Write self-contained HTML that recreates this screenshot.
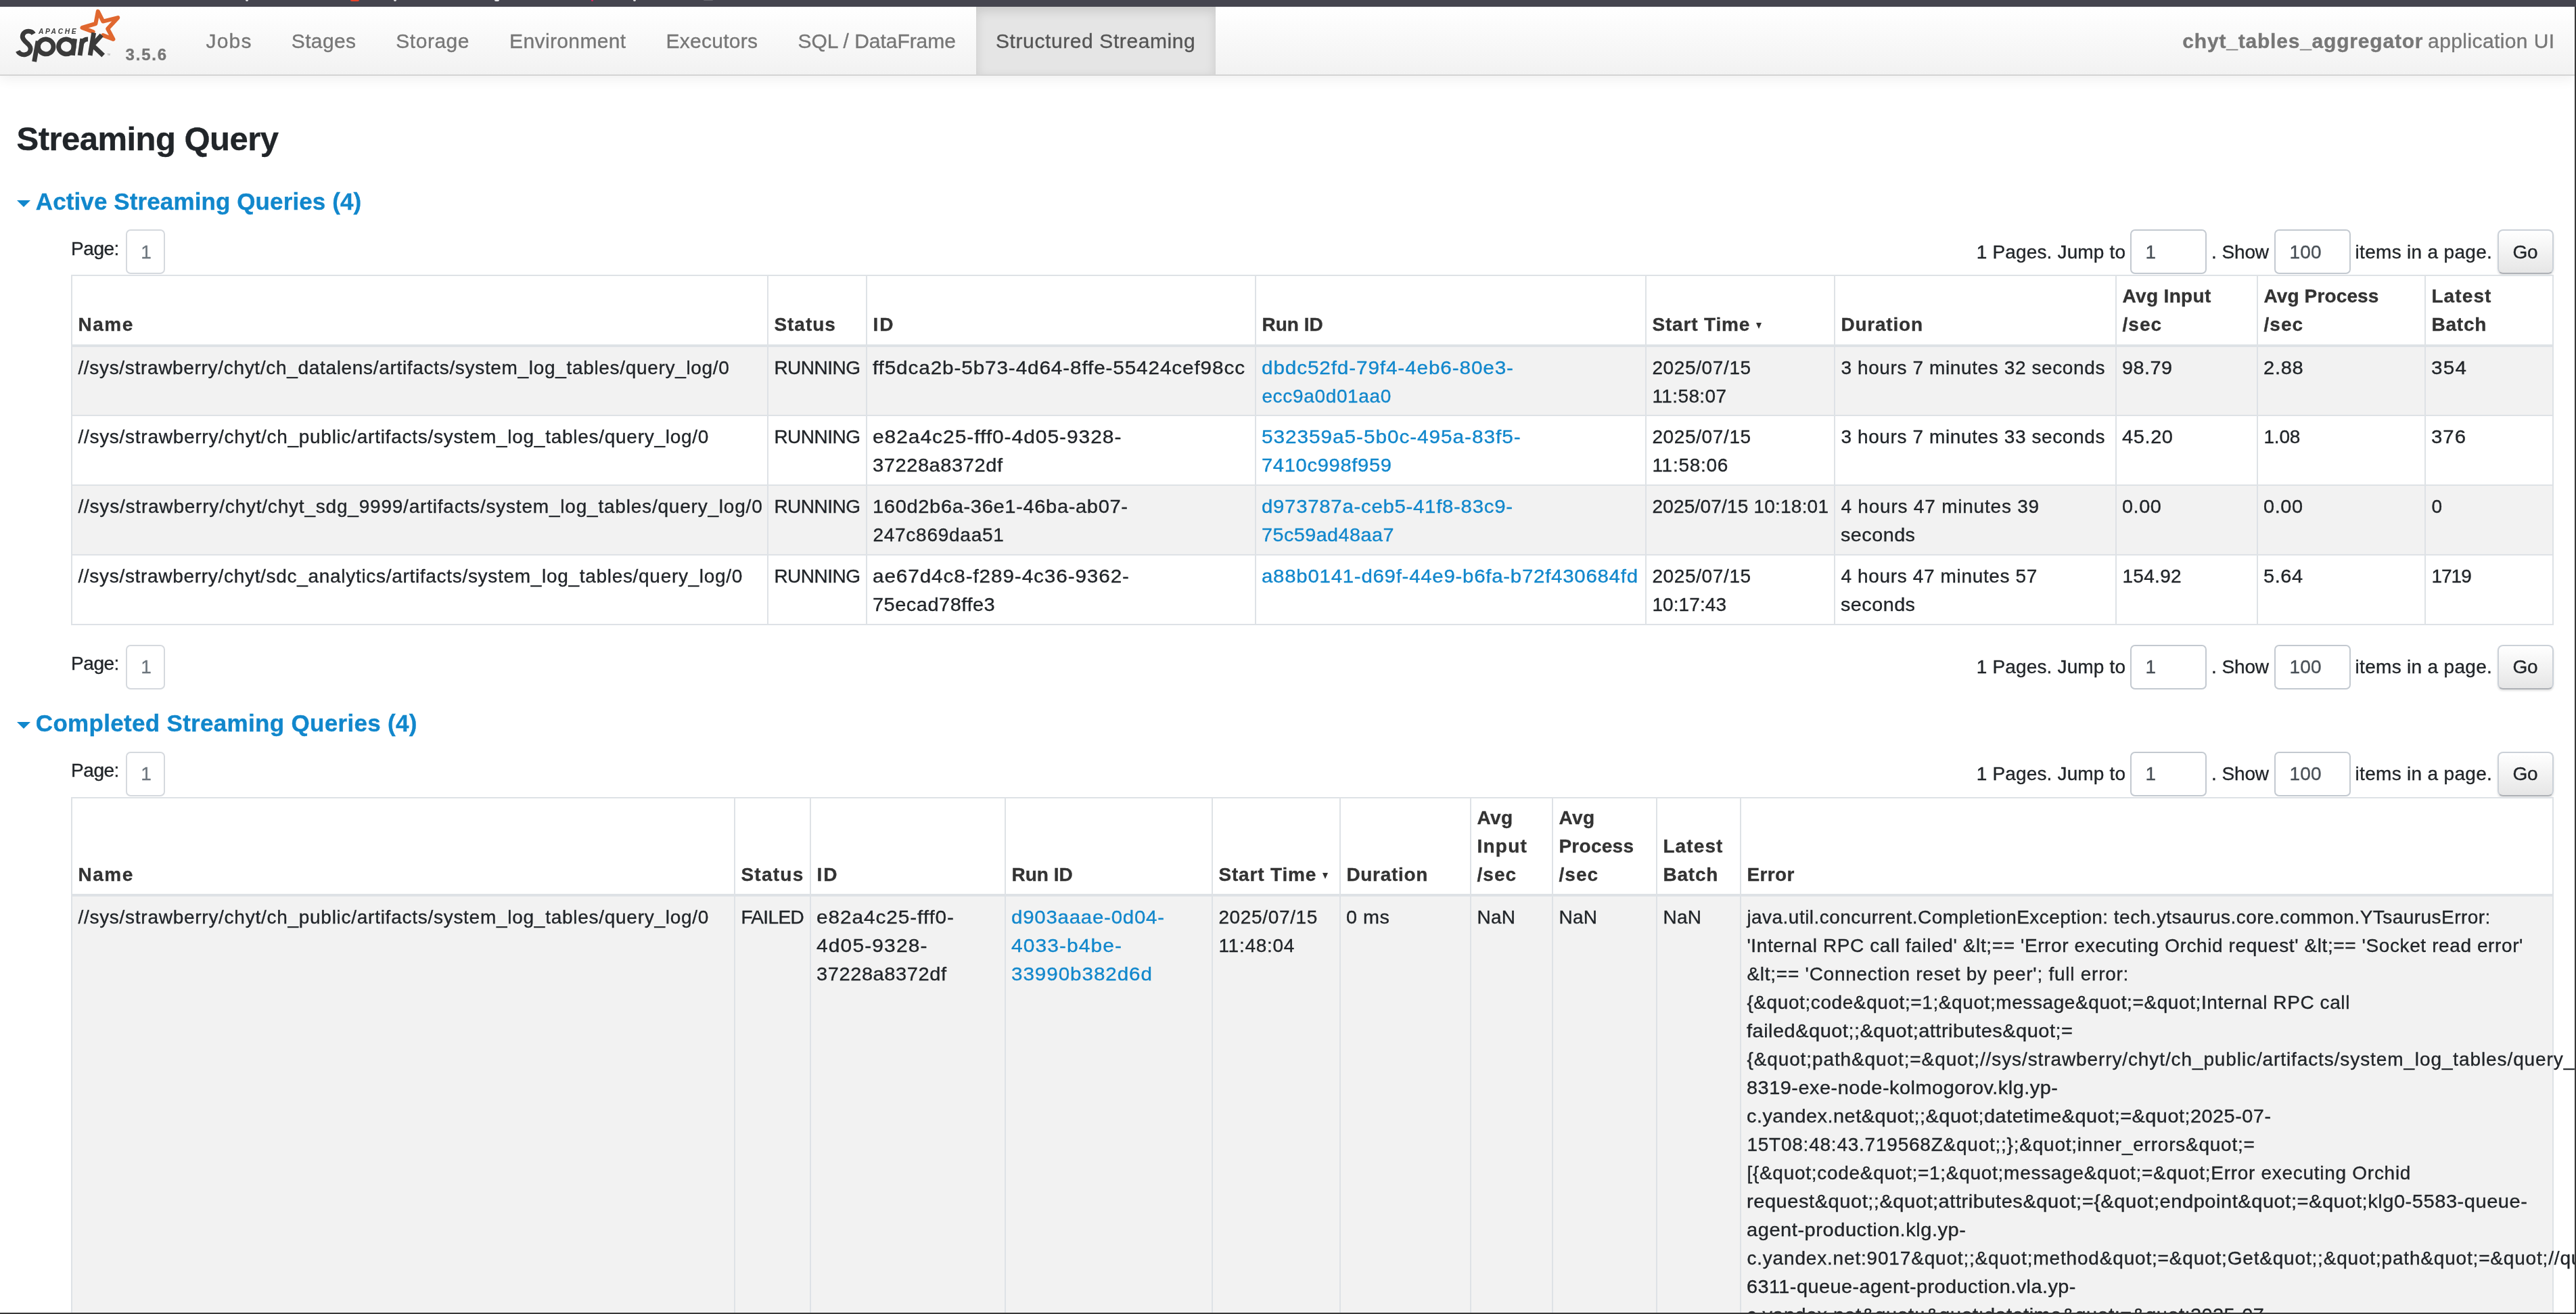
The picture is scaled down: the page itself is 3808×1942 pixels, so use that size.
<!DOCTYPE html><html><head><meta charset="utf-8"><title>Streaming Query</title><style>
html,body{margin:0;padding:0;}
body{width:3808px;height:1942px;overflow:hidden;position:relative;will-change:transform;background:#fff;font-family:"Liberation Sans", sans-serif;color:#212529;-webkit-text-stroke:0.35px currentColor;}
.t{position:absolute;white-space:pre;}
.a{position:absolute;}
#topbar{left:0;top:0;width:3808px;height:10px;background:#45454f;z-index:5}
#rframe{left:3806px;top:10px;width:2px;height:1932px;background:#383838;z-index:5}
#bframe{left:0;top:1940px;width:3808px;height:2px;background:#383838;z-index:5}
#nav{left:0;top:10px;width:3806px;height:100px;background:linear-gradient(#ffffff,#f2f2f2);border-bottom:2px solid #d4d4d4;box-shadow:0 4px 18px rgba(0,0,0,.07);}
#navact{left:1443px;top:10px;width:354px;height:100px;background:#e5e5e5;box-shadow:inset 0 6px 16px rgba(0,0,0,.125);}
.box{position:absolute;box-sizing:border-box;border:2px solid #ced4da;border-radius:7px;background:#fff;}
.go{position:absolute;box-sizing:border-box;border:2px solid #cbd1d8;border-bottom-color:#aeb1b6;border-radius:8px;background:linear-gradient(#ffffff,#e6e6e6);box-shadow:0 2px 3px rgba(0,0,0,.12);}
.arrow{position:absolute;width:0;height:0;border-left:10px solid transparent;border-right:10px solid transparent;border-top:10px solid #1187cc;}
table.tb{position:absolute;border-collapse:separate;border-spacing:0;table-layout:fixed;border-top:2px solid #dee2e6;border-left:2px solid #dee2e6;font-size:28px;line-height:42px;}
table.tb th, table.tb td{box-sizing:border-box;border-right:2px solid #dee2e6;border-bottom:2px solid #dee2e6;padding:8.5px 8.4px;white-space:nowrap;overflow:visible;text-align:left;}
table.tb th{vertical-align:bottom;font-weight:700;color:#333;border-bottom-width:4px;}
table.tb td{vertical-align:top;}
table.tb tr.odd td{background:#f2f2f2;}
table.tb td{padding:9.5px 8.4px 7.5px 8.4px;}
table.tb tbody tr:first-child td{padding-bottom:6.5px;}
table.tb.c3 th{padding-top:8px;padding-bottom:7px}
a{color:#1187cc;text-decoration:none;}
</style></head><body><div id="topbar" class="a"></div><div id="rframe" class="a"></div><div id="bframe" class="a"></div><div class="a" style="left:363px;top:0;width:4px;height:2px;background:#e8e8ea;z-index:6;border-radius:0 0 2px 2px"></div><div class="a" style="left:518px;top:0;width:13px;height:2px;background:#e8432a;z-index:6;border-radius:0 0 2px 2px"></div><div class="a" style="left:582px;top:0;width:4px;height:2px;background:#e8e8ea;z-index:6;border-radius:0 0 2px 2px"></div><div class="a" style="left:731px;top:0;width:7px;height:2px;background:#e8e8ea;z-index:6;border-radius:0 0 2px 2px"></div><div class="a" style="left:874px;top:0;width:3px;height:2px;background:#e0245e;z-index:6;border-radius:0 0 2px 2px"></div><div class="a" style="left:936px;top:0;width:4px;height:2px;background:#e8e8ea;z-index:6;border-radius:0 0 2px 2px"></div><div class="a" style="left:1040px;top:0;width:14px;height:1px;background:#6a6a72;z-index:6;border-radius:0 0 2px 2px"></div><div id="nav" class="a"></div><div id="navact" class="a"></div><svg class="a" style="left:15px;top:10px" width="170" height="90" viewBox="0 0 2482 1314">
<g fill="none" stroke-linecap="round" stroke-linejoin="round">
<polyline points="1790,540 1555,450 1845,365 1895,100 2005,315 2325,235 2105,475 2225,700 2005,615" stroke="#e0672f" stroke-width="88"/>
<g stroke="#3a3a3a" stroke-width="100">
<path d="M505,585 C470,520 330,490 275,600 C230,700 360,770 400,820 C460,880 460,1000 330,1030 C240,1050 180,990 165,955" stroke-linecap="butt"/>
<ellipse cx="770" cy="860" rx="165" ry="160" transform="rotate(8 770 860)"/>
<path d="M600,740 L520,1185" stroke-linecap="butt"/>
<ellipse cx="1210" cy="860" rx="165" ry="160" transform="rotate(8 1210 860)"/>
<path d="M1395,690 L1350,1050" stroke-linecap="butt"/>
<path d="M1560,690 L1505,1050" stroke-linecap="butt"/>
<path d="M1540,800 C1570,720 1620,700 1680,700" stroke-linecap="butt"/>
<path d="M1805,560 L1725,1050" stroke-linecap="butt"/>
<path d="M1975,610 L1775,830 L2010,1050" stroke-linecap="butt"/>
</g>
</g>
<text x="612" y="582" font-family="Liberation Sans" font-weight="700" font-style="italic" font-size="150" letter-spacing="38" fill="#3a3a3a">APACHE</text>
<text x="2100" y="1050" font-family="Liberation Sans" font-size="40" fill="#777">TM</text>
</svg>
<div class="t" style="left:185.5px;top:68.9px;font-size:24px;line-height:24px;font-weight:700;color:#777;letter-spacing:1.827px;">3.5.6</div><div class="t" style="left:304.4px;top:45.6px;font-size:30px;line-height:30px;font-weight:400;color:#777;letter-spacing:1.242px;">Jobs</div><div class="t" style="left:430.8px;top:45.6px;font-size:30px;line-height:30px;font-weight:400;color:#777;letter-spacing:0.359px;">Stages</div><div class="t" style="left:585.3px;top:45.6px;font-size:30px;line-height:30px;font-weight:400;color:#777;letter-spacing:0.520px;">Storage</div><div class="t" style="left:753.1px;top:45.6px;font-size:30px;line-height:30px;font-weight:400;color:#777;letter-spacing:0.368px;">Environment</div><div class="t" style="left:984.5px;top:45.6px;font-size:30px;line-height:30px;font-weight:400;color:#777;letter-spacing:0.276px;">Executors</div><div class="t" style="left:1179.5px;top:45.6px;font-size:30px;line-height:30px;font-weight:400;color:#777;letter-spacing:-0.041px;">SQL / DataFrame</div><div class="t" style="left:1472.0px;top:45.6px;font-size:30px;line-height:30px;font-weight:400;color:#555;letter-spacing:0.596px;">Structured Streaming</div><div class="t" style="left:3226.3px;top:45.6px;font-size:30px;line-height:30px;font-weight:700;color:#777;letter-spacing:0.797px;">chyt_tables_aggregator</div><div class="t" style="left:3589.1px;top:45.6px;font-size:30px;line-height:30px;font-weight:400;color:#777;letter-spacing:0.401px;">application UI</div><div class="t" style="left:24.6px;top:180.5px;font-size:49px;line-height:49px;font-weight:700;color:#212529;letter-spacing:-0.533px;">Streaming Query</div><div class="arrow" style="left:25px;top:296px"></div><div class="t" style="left:52.8px;top:280.4px;font-size:35px;line-height:35px;font-weight:700;color:#1187cc;letter-spacing:0.107px;">Active Streaming Queries (4)</div><div class="arrow" style="left:25px;top:1067px"></div><div class="t" style="left:52.8px;top:1050.9px;font-size:35px;line-height:35px;font-weight:700;color:#1187cc;letter-spacing:0.313px;">Completed Streaming Queries (4)</div><div class="t" style="left:105.1px;top:354.3px;font-size:28px;line-height:28px;font-weight:400;color:#212529;letter-spacing:-0.468px;">Page:</div><div class="box" style="left:186px;top:339px;width:58px;height:66px;border-color:#d5d9de"></div><div class="t" style="left:208.3px;top:359.3px;font-size:28px;line-height:28px;font-weight:400;color:#6c757d;letter-spacing:0.000px;">1</div><div class="t" style="left:2921.8px;top:358.8px;font-size:28px;line-height:28px;font-weight:400;color:#212529;letter-spacing:0.153px;">1 Pages. Jump to</div><div class="box" style="left:3149px;top:339px;width:113px;height:66px;border-color:#c3c9d0"></div><div class="t" style="left:3171.5px;top:358.8px;font-size:28px;line-height:28px;font-weight:400;color:#495057;letter-spacing:0.000px;">1</div><div class="t" style="left:3269.1px;top:358.8px;font-size:28px;line-height:28px;font-weight:400;color:#212529;letter-spacing:-0.122px;">. Show</div><div class="box" style="left:3362px;top:339px;width:113px;height:66px;border-color:#c3c9d0"></div><div class="t" style="left:3384.5px;top:358.8px;font-size:28px;line-height:28px;font-weight:400;color:#495057;letter-spacing:0.141px;">100</div><div class="t" style="left:3481.5px;top:358.8px;font-size:28px;line-height:28px;font-weight:400;color:#212529;letter-spacing:0.315px;">items in a page.</div><div class="go" style="left:3692px;top:339px;width:83px;height:66px;"></div><div class="t" style="left:3714.5px;top:358.8px;font-size:28px;line-height:28px;font-weight:400;color:#212529;letter-spacing:-0.359px;">Go</div><div class="t" style="left:105.1px;top:967.3px;font-size:28px;line-height:28px;font-weight:400;color:#212529;letter-spacing:-0.468px;">Page:</div><div class="box" style="left:186px;top:952.5px;width:58px;height:66px;border-color:#d5d9de"></div><div class="t" style="left:208.3px;top:972.3px;font-size:28px;line-height:28px;font-weight:400;color:#6c757d;letter-spacing:0.000px;">1</div><div class="t" style="left:2921.8px;top:971.6px;font-size:28px;line-height:28px;font-weight:400;color:#212529;letter-spacing:0.153px;">1 Pages. Jump to</div><div class="box" style="left:3149px;top:952.5px;width:113px;height:66px;border-color:#c3c9d0"></div><div class="t" style="left:3171.5px;top:971.6px;font-size:28px;line-height:28px;font-weight:400;color:#495057;letter-spacing:0.000px;">1</div><div class="t" style="left:3269.1px;top:971.6px;font-size:28px;line-height:28px;font-weight:400;color:#212529;letter-spacing:-0.122px;">. Show</div><div class="box" style="left:3362px;top:952.5px;width:113px;height:66px;border-color:#c3c9d0"></div><div class="t" style="left:3384.5px;top:971.6px;font-size:28px;line-height:28px;font-weight:400;color:#495057;letter-spacing:0.141px;">100</div><div class="t" style="left:3481.5px;top:971.6px;font-size:28px;line-height:28px;font-weight:400;color:#212529;letter-spacing:0.315px;">items in a page.</div><div class="go" style="left:3692px;top:952.5px;width:83px;height:66px;"></div><div class="t" style="left:3714.5px;top:971.6px;font-size:28px;line-height:28px;font-weight:400;color:#212529;letter-spacing:-0.359px;">Go</div><div class="t" style="left:105.1px;top:1124.9px;font-size:28px;line-height:28px;font-weight:400;color:#212529;letter-spacing:-0.468px;">Page:</div><div class="box" style="left:186px;top:1110.5px;width:58px;height:66px;border-color:#d5d9de"></div><div class="t" style="left:208.3px;top:1129.9px;font-size:28px;line-height:28px;font-weight:400;color:#6c757d;letter-spacing:0.000px;">1</div><div class="t" style="left:2921.8px;top:1129.6px;font-size:28px;line-height:28px;font-weight:400;color:#212529;letter-spacing:0.153px;">1 Pages. Jump to</div><div class="box" style="left:3149px;top:1110.5px;width:113px;height:66px;border-color:#c3c9d0"></div><div class="t" style="left:3171.5px;top:1129.6px;font-size:28px;line-height:28px;font-weight:400;color:#495057;letter-spacing:0.000px;">1</div><div class="t" style="left:3269.1px;top:1129.6px;font-size:28px;line-height:28px;font-weight:400;color:#212529;letter-spacing:-0.122px;">. Show</div><div class="box" style="left:3362px;top:1110.5px;width:113px;height:66px;border-color:#c3c9d0"></div><div class="t" style="left:3384.5px;top:1129.6px;font-size:28px;line-height:28px;font-weight:400;color:#495057;letter-spacing:0.141px;">100</div><div class="t" style="left:3481.5px;top:1129.6px;font-size:28px;line-height:28px;font-weight:400;color:#212529;letter-spacing:0.315px;">items in a page.</div><div class="go" style="left:3692px;top:1110.5px;width:83px;height:66px;"></div><div class="t" style="left:3714.5px;top:1129.6px;font-size:28px;line-height:28px;font-weight:400;color:#212529;letter-spacing:-0.359px;">Go</div><table class="tb " style="left:105px;top:406px;width:3670px;"><colgroup><col style="width:1029px"><col style="width:146px"><col style="width:575px"><col style="width:577px"><col style="width:279px"><col style="width:416px"><col style="width:209px"><col style="width:248px"><col style="width:189px"></colgroup><thead><tr><th style="height:101px"><span style="letter-spacing:1.578px;">Name</span></th><th style="height:101px"><span style="letter-spacing:0.984px;">Status</span></th><th style="height:101px"><span style="letter-spacing:2.000px;">ID</span></th><th style="height:101px"><span style="letter-spacing:0.016px;">Run ID</span></th><th style="height:101px"><span style="letter-spacing:0.842px;">Start Time</span><span style="display:inline-block;width:0;height:0;border-left:4.5px solid transparent;border-right:4.5px solid transparent;border-top:9px solid #333;margin-left:9px;position:relative;top:-3px"></span></th><th style="height:101px"><span style="letter-spacing:0.784px;">Duration</span></th><th style="height:101px"><span style="letter-spacing:0.367px;">Avg Input</span><br><span style="letter-spacing:1.100px;">/sec</span></th><th style="height:101px"><span style="letter-spacing:0.139px;">Avg Process</span><br><span style="letter-spacing:1.100px;">/sec</span></th><th style="height:101px"><span style="letter-spacing:1.106px;">Latest</span><br><span style="letter-spacing:0.801px;">Batch</span></th></tr></thead><tbody><tr class="odd"><td><span style="letter-spacing:0.680px;">//sys/strawberry/chyt/ch_datalens/artifacts/system_log_tables/query_log/0</span></td><td><span style="letter-spacing:-0.495px;">RUNNING</span></td><td><span style="display:inline-block;transform:scaleX(1.0620);transform-origin:0 50%;letter-spacing:0.816px;">ff5dca2b-5b73-4d64-8ffe-55424cef98cc</span></td><td><a><span style="display:inline-block;transform:scaleX(1.0609);transform-origin:0 50%;letter-spacing:0.828px;">dbdc52fd-79f4-4eb6-80e3-</span></a><br><a><span style="letter-spacing:0.661px;">ecc9a0d01aa0</span></a></td><td><span style="letter-spacing:0.629px;">2025/07/15</span><br><span style="letter-spacing:0.397px;">11:58:07</span></td><td><span style="letter-spacing:0.609px;">3 hours 7 minutes 32 seconds</span></td><td><span style="display:inline-block;transform:scaleX(1.0280);transform-origin:0 50%;letter-spacing:0.477px;">98.79</span></td><td><span style="display:inline-block;transform:scaleX(1.0394);transform-origin:0 50%;letter-spacing:0.689px;">2.88</span></td><td><span style="display:inline-block;transform:scaleX(1.0565);transform-origin:0 50%;letter-spacing:1.250px;">354</span></td></tr><tr class="even"><td><span style="letter-spacing:0.731px;">//sys/strawberry/chyt/ch_public/artifacts/system_log_tables/query_log/0</span></td><td><span style="letter-spacing:-0.495px;">RUNNING</span></td><td><span style="display:inline-block;transform:scaleX(1.0691);transform-origin:0 50%;letter-spacing:0.907px;">e82a4c25-fff0-4d05-9328-</span><br><span style="display:inline-block;transform:scaleX(1.0361);transform-origin:0 50%;letter-spacing:0.567px;">37228a8372df</span></td><td><a><span style="display:inline-block;transform:scaleX(1.0637);transform-origin:0 50%;letter-spacing:0.883px;">532359a5-5b0c-495a-83f5-</span></a><br><a><span style="display:inline-block;transform:scaleX(1.0408);transform-origin:0 50%;letter-spacing:0.633px;">7410c998f959</span></a></td><td><span style="letter-spacing:0.629px;">2025/07/15</span><br><span style="letter-spacing:0.725px;">11:58:06</span></td><td><span style="letter-spacing:0.609px;">3 hours 7 minutes 33 seconds</span></td><td><span style="display:inline-block;transform:scaleX(1.0351);transform-origin:0 50%;letter-spacing:0.594px;">45.20</span></td><td><span style="letter-spacing:-0.167px;">1.08</span></td><td><span style="display:inline-block;transform:scaleX(1.0458);transform-origin:0 50%;letter-spacing:1.023px;">376</span></td></tr><tr class="odd"><td><span style="letter-spacing:0.796px;">//sys/strawberry/chyt/chyt_sdg_9999/artifacts/system_log_tables/query_log/0</span></td><td><span style="letter-spacing:-0.495px;">RUNNING</span></td><td><span style="display:inline-block;transform:scaleX(1.0405);transform-origin:0 50%;letter-spacing:0.590px;">160d2b6a-36e1-46ba-ab07-</span><br><span style="letter-spacing:0.746px;">247c869daa51</span></td><td><a><span style="display:inline-block;transform:scaleX(1.0491);transform-origin:0 50%;letter-spacing:0.688px;">d973787a-ceb5-41f8-83c9-</span></a><br><a><span style="display:inline-block;transform:scaleX(1.0273);transform-origin:0 50%;letter-spacing:0.447px;">75c59ad48aa7</span></a></td><td><span style="letter-spacing:0.204px;">2025/07/15 10:18:01</span></td><td><span style="letter-spacing:0.787px;">4 hours 47 minutes 39</span><br><span style="display:inline-block;transform:scaleX(1.0273);transform-origin:0 50%;letter-spacing:0.463px;">seconds</span></td><td><span style="display:inline-block;transform:scaleX(1.0303);transform-origin:0 50%;letter-spacing:0.534px;">0.00</span></td><td><span style="display:inline-block;transform:scaleX(1.0321);transform-origin:0 50%;letter-spacing:0.565px;">0.00</span></td><td>0</td></tr><tr class="even"><td><span style="letter-spacing:0.694px;">//sys/strawberry/chyt/sdc_analytics/artifacts/system_log_tables/query_log/0</span></td><td><span style="letter-spacing:-0.495px;">RUNNING</span></td><td><span style="display:inline-block;transform:scaleX(1.0610);transform-origin:0 50%;letter-spacing:0.844px;">ae67d4c8-f289-4c36-9362-</span><br><span style="display:inline-block;transform:scaleX(1.0340);transform-origin:0 50%;letter-spacing:0.505px;">75ecad78ffe3</span></td><td><a><span style="display:inline-block;transform:scaleX(1.0511);transform-origin:0 50%;letter-spacing:0.701px;">a88b0141-d69f-44e9-b6fa-b72f430684fd</span></a></td><td><span style="letter-spacing:0.629px;">2025/07/15</span><br><span style="letter-spacing:0.100px;">10:17:43</span></td><td><span style="letter-spacing:0.647px;">4 hours 47 minutes 57</span><br><span style="display:inline-block;transform:scaleX(1.0273);transform-origin:0 50%;letter-spacing:0.463px;">seconds</span></td><td><span style="letter-spacing:0.332px;">154.92</span></td><td><span style="display:inline-block;transform:scaleX(1.0321);transform-origin:0 50%;letter-spacing:0.565px;">5.64</span></td><td><span style="letter-spacing:-0.966px;">1719</span></td></tr></tbody></table><table class="tb c3" style="left:105px;top:1178px;width:3670px;"><colgroup><col style="width:980px"><col style="width:112px"><col style="width:288px"><col style="width:306px"><col style="width:189px"><col style="width:193px"><col style="width:121px"><col style="width:154px"><col style="width:124px"><col style="width:1201px"></colgroup><thead><tr><th style="height:141px"><span style="letter-spacing:1.578px;">Name</span></th><th style="height:141px"><span style="letter-spacing:1.264px;">Status</span></th><th style="height:141px"><span style="letter-spacing:2.000px;">ID</span></th><th style="height:141px"><span style="letter-spacing:0.016px;">Run ID</span></th><th style="height:141px"><span style="letter-spacing:0.842px;">Start Time</span><span style="display:inline-block;width:0;height:0;border-left:4.5px solid transparent;border-right:4.5px solid transparent;border-top:9px solid #333;margin-left:9px;position:relative;top:-3px"></span></th><th style="height:141px"><span style="letter-spacing:0.699px;">Duration</span></th><th style="height:141px"><span style="letter-spacing:0.370px;">Avg</span><br><span style="letter-spacing:1.270px;">Input</span><br><span style="letter-spacing:1.100px;">/sec</span></th><th style="height:141px"><span style="letter-spacing:0.370px;">Avg</span><br><span style="letter-spacing:0.272px;">Process</span><br><span style="letter-spacing:1.100px;">/sec</span></th><th style="height:141px"><span style="letter-spacing:1.106px;">Latest</span><br><span style="letter-spacing:0.801px;">Batch</span></th><th style="height:141px"><span style="letter-spacing:0.383px;">Error</span></th></tr></thead><tbody><tr class="odd"><td><span style="letter-spacing:0.731px;">//sys/strawberry/chyt/ch_public/artifacts/system_log_tables/query_log/0</span></td><td><span style="letter-spacing:-0.637px;">FAILED</span></td><td><span style="display:inline-block;transform:scaleX(1.0653);transform-origin:0 50%;letter-spacing:0.846px;">e82a4c25-fff0-</span><br><span style="display:inline-block;transform:scaleX(1.0707);transform-origin:0 50%;letter-spacing:1.051px;">4d05-9328-</span><br><span style="display:inline-block;transform:scaleX(1.0361);transform-origin:0 50%;letter-spacing:0.567px;">37228a8372df</span></td><td><a><span style="display:inline-block;transform:scaleX(1.0498);transform-origin:0 50%;letter-spacing:0.750px;">d903aaae-0d04-</span></a><br><a><span style="display:inline-block;transform:scaleX(1.0690);transform-origin:0 50%;letter-spacing:1.027px;">4033-b4be-</span></a><br><a><span style="display:inline-block;transform:scaleX(1.0565);transform-origin:0 50%;letter-spacing:0.909px;">33990b382d6d</span></a></td><td><span style="letter-spacing:0.651px;">2025/07/15</span><br><span style="letter-spacing:0.725px;">11:48:04</span></td><td><span style="display:inline-block;transform:scaleX(1.0273);transform-origin:0 50%;letter-spacing:0.537px;">0 ms</span></td><td><span style="letter-spacing:0.292px;">NaN</span></td><td><span style="letter-spacing:0.292px;">NaN</span></td><td><span style="letter-spacing:0.292px;">NaN</span></td><td><span style="letter-spacing:0.465px;">java.util.concurrent.CompletionException: tech.ytsaurus.core.common.YTsaurusError:</span><br><span style="letter-spacing:0.599px;">'Internal RPC call failed' &amp;lt;== 'Error executing Orchid request' &amp;lt;== 'Socket read error'</span><br><span style="letter-spacing:0.744px;">&amp;lt;== 'Connection reset by peer'; full error:</span><br><span style="letter-spacing:0.587px;">{&amp;quot;code&amp;quot;=1;&amp;quot;message&amp;quot;=&amp;quot;Internal RPC call</span><br><span style="display:inline-block;transform:scaleX(1.0366);transform-origin:0 50%;letter-spacing:0.453px;">failed&amp;quot;;&amp;quot;attributes&amp;quot;=</span><br><span style="letter-spacing:0.895px;">{&amp;quot;path&amp;quot;=&amp;quot;//sys/strawberry/chyt/ch_public/artifacts/system_log_tables/query_log/0&amp;quot;;&amp;quot;node&amp;quot;=&amp;quot;klg0-</span><br><span style="display:inline-block;transform:scaleX(1.0341);transform-origin:0 50%;letter-spacing:0.458px;">8319-exe-node-kolmogorov.klg.yp-</span><br><span style="display:inline-block;transform:scaleX(1.0336);transform-origin:0 50%;letter-spacing:0.446px;">c.yandex.net&amp;quot;;&amp;quot;datetime&amp;quot;=&amp;quot;2025-07-</span><br><span style="letter-spacing:0.767px;">15T08:48:43.719568Z&amp;quot;;};&amp;quot;inner_errors&amp;quot;=</span><br><span style="letter-spacing:0.715px;">[{&amp;quot;code&amp;quot;=1;&amp;quot;message&amp;quot;=&amp;quot;Error executing Orchid</span><br><span style="display:inline-block;transform:scaleX(1.0387);transform-origin:0 50%;letter-spacing:0.499px;">request&amp;quot;;&amp;quot;attributes&amp;quot;={&amp;quot;endpoint&amp;quot;=&amp;quot;klg0-5583-queue-</span><br><span style="display:inline-block;transform:scaleX(1.0393);transform-origin:0 50%;letter-spacing:0.494px;">agent-production.klg.yp-</span><br><span style="letter-spacing:0.818px;">c.yandex.net:9017&amp;quot;;&amp;quot;method&amp;quot;=&amp;quot;Get&amp;quot;;&amp;quot;path&amp;quot;=&amp;quot;//queue/agent&amp;quot;;&amp;quot;node&amp;quot;=&amp;quot;vla0-</span><br><span style="display:inline-block;transform:scaleX(1.0320);transform-origin:0 50%;letter-spacing:0.417px;">6311-queue-agent-production.vla.yp-</span><br><span style="display:inline-block;transform:scaleX(1.0336);transform-origin:0 50%;letter-spacing:0.446px;">c.yandex.net&amp;quot;;&amp;quot;datetime&amp;quot;=&amp;quot;2025-07-</span><br><span style="letter-spacing:0.767px;">15T08:48:43.719101Z&amp;quot;;};&amp;quot;inner_errors&amp;quot;=</span></td></tr></tbody></table></body></html>
